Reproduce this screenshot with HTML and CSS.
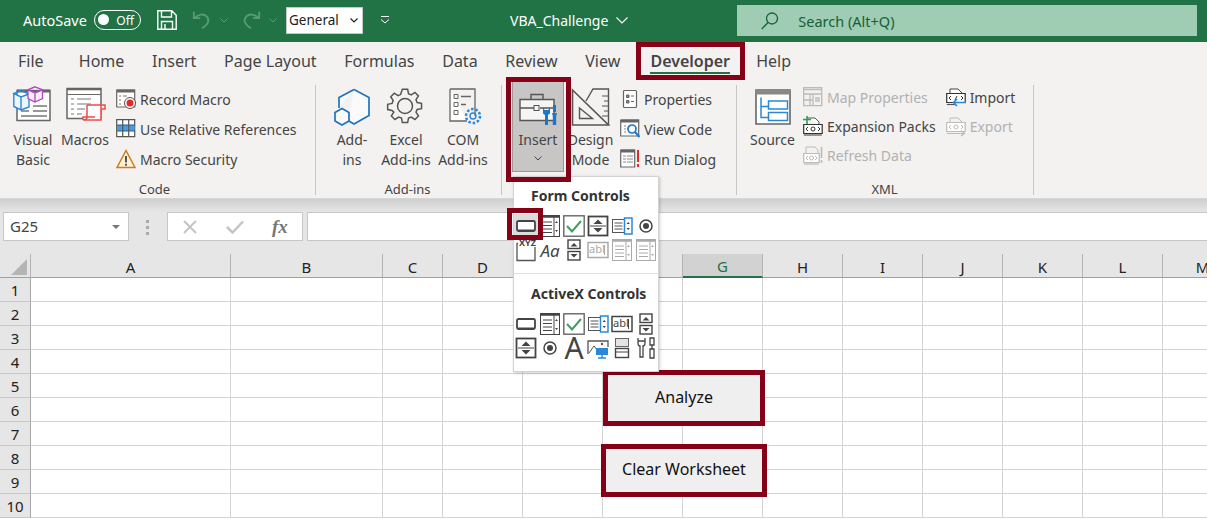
FILE: index.html
```html
<!DOCTYPE html>
<html lang="en">
<head>
    <meta charset="UTF-8">
    <title>VBA_Challenge - Excel</title>
    <link rel="stylesheet" href="styles.css">
</head>
<body>
    <svg class="defs" width="0" height="0">
        <symbol id="c-button" viewBox="0 0 22 22"><rect x="2" y="6" width="18" height="10" rx="1.5" fill="#fff" stroke="currentColor" stroke-width="1.8"/><path d="M3 15.5h16" stroke="currentColor" stroke-width="2"/></symbol>
        <symbol id="c-combo" viewBox="0 0 22 22"><rect x="1.5" y=".5" width="19" height="21" fill="#fff" stroke="currentColor"/><path d="M2 1.5h18" stroke="currentColor" stroke-width="2.5"/><path d="M4 7h9M4 10.5h9M4 14h9M4 17.5h9M15 1v20" stroke="currentColor"/><path d="M16 8l1.5-2 1.500 2zM16 15l1.5 2 1.500-2z" fill="currentColor"/></symbol>
        <symbol id="c-check" viewBox="0 0 22 22"><rect x=".8" y=".8" width="20.400" height="20.400" fill="#fff" stroke="#666" stroke-width="1.400"/><path d="M4 11l5 5.500L18 6" fill="none" stroke="#3f9f5f" stroke-width="2"/></symbol>
        <symbol id="c-spin" viewBox="0 0 22 22"><rect x="1.500" y="1.500" width="19" height="19" fill="#fff" stroke="currentColor" stroke-width="1.800"/><path d="M3 11h16" stroke="currentColor"/><path d="M6.500 9l4.500-4.500L15.500 9zM6.500 13l4.500 4.500 4.500-4.500z" fill="currentColor"/></symbol>
        <symbol id="c-list" viewBox="0 0 22 22"><rect x="1.500" y="4.500" width="19" height="13" fill="#fff" stroke="#555"/><path d="M3.500 8h8M3.500 11h8M3.500 14h8" stroke="#555"/><rect x="13.500" y="3" width="7.500" height="16" fill="#fff" stroke="#2b88d8" stroke-width="1.500"/><path d="M15.500 9l1.700-2 1.700 2zM15.500 13l1.700 2 1.700-2z" fill="#444"/></symbol>
        <symbol id="c-radio" viewBox="0 0 22 22"><circle cx="11" cy="11" r="6" fill="#fff" stroke="currentColor" stroke-width="1.500"/><circle cx="11" cy="11" r="3" fill="currentColor"/></symbol>
        <symbol id="c-scroll" viewBox="0 0 22 22"><rect x="5" y="1" width="12" height="8.500" fill="#fff" stroke="currentColor" stroke-width="1.400"/><rect x="5" y="12.500" width="12" height="8.500" fill="#fff" stroke="currentColor" stroke-width="1.400"/><path d="M7.500 7.500l3.500-3.500 3.500 3.500zM7.500 15l3.500 3.500 3.500-3.500z" fill="currentColor"/></symbol>
        <symbol id="c-ablbox" viewBox="0 0 22 22"><rect x="1" y="3.500" width="20" height="15" fill="#fff" stroke="currentColor" stroke-width="1.500"/><path d="M17.500 6v10" stroke="currentColor"/></symbol>
    </svg>

    <!-- title bar -->
    <div class="titlebar">
        <span class="autosave">AutoSave</span>
        <span class="toggle"><i></i>Off</span>
        <svg class="save" viewBox="0 0 20 20"><path d="M.8.8h14l4.400 4.400v14H.8z M4.500 1v6h10V1 M4.500 19.200v-7.700h11v7.700 M8 14v5" fill="none" stroke="#fff" stroke-width="1.400"/></svg>
        <svg class="undo" viewBox="0 0 22 22"><path d="M2 2v7h7M3 9c4-5 10-5 13-2 4 4 2 9-5 13" fill="none" stroke="#5a9a78" stroke-width="2"/></svg>
        <svg class="chev dim" viewBox="0 0 8 5"><path d="M.5.5L4 4 7.500.5" fill="none" stroke="#5a9a78"/></svg>
        <svg class="redo" viewBox="0 0 22 22"><path d="M20 2v7h-7M19 9c-4-5-10-5-13-2-4 4-2 9 5 13" fill="none" stroke="#5a9a78" stroke-width="2"/></svg>
        <svg class="chev dim" viewBox="0 0 8 5"><path d="M.5.5L4 4 7.500.5" fill="none" stroke="#5a9a78"/></svg>
        <span class="styledrop">General<svg class="chev" viewBox="0 0 8 5"><path d="M.5.5L4 4 7.500.5" fill="none" stroke="#222" stroke-width="1.200"/></svg></span>
        <svg class="custom" viewBox="0 0 10 8"><path d="M1 .5h8M1 3.500L5 7l4-3.500" fill="none" stroke="#fff"/></svg>
        <span class="docname">VBA_Challenge<svg class="docchev" viewBox="0 0 12 7"><path d="M.5.5L6 6l5.500-5.500" fill="none" stroke="#fff" stroke-width="1.100"/></svg></span>
        <div class="search">
            <svg class="lens" viewBox="0 0 18 18"><circle cx="11" cy="6.500" r="5.500" fill="none" stroke="#14603a" stroke-width="1.300"/><path d="M7 10.500L.8 17" stroke="#14603a" stroke-width="1.300"/></svg>
            Search (Alt+Q)
        </div>
    </div>

    <!-- tabs -->
    <div class="tabs">
        <span class="tab tab-file">File</span>
        <span class="tab">Home</span>
        <span class="tab">Insert</span>
        <span class="tab">Page Layout</span>
        <span class="tab">Formulas</span>
        <span class="tab">Data</span>
        <span class="tab">Review</span>
        <span class="tab">View</span>
        <span class="tab active">Developer</span>
        <span class="tab">Help</span>
    </div>

    <!-- ribbon -->
    <div class="ribbon">
        <div class="group g-code">
            <div class="group-body">
                <div class="big w50">
                    <svg class="ico" viewBox="0 0 40 36"><path d="M4 4.500h33v30H4z" fill="#fff" stroke="#666" stroke-width="1.500"/><path d="M4 5h33" stroke="#666" stroke-width="3"/><path d="M20 20h14M8 25h8M20 25h14M8 30h26" stroke="#777" stroke-width="1.300"/><path d="M8 4.500l8 3.500v13L8 24 .8 20.500v-13z M8 4.500L.8 7.500 8 11l8-3 M8 11v13" fill="#eef6fd" stroke="#2b88d8" stroke-width="1.400"/><path d="M22 .8l7.500 3v8.700L22 16l-7-3.500V3.800z M15 3.800L22 7l7.500-3.200 M22 7v9" fill="#f8eefb" stroke="#b146c2" stroke-width="1.300"/></svg>
                    <span>Visual<br>Basic</span>
                </div>
                <div class="big w50 m2">
                    <svg class="ico" viewBox="0 0 40 36"><path d="M2 2.500h34v30H2z" fill="#fff" stroke="#666" stroke-width="1.500"/><path d="M2 3.500h34" stroke="#666" stroke-width="1.500"/><path d="M2 8.500h34" stroke="#666"/><path d="M6 13h3M12 13h14M6 18h3M12 18h14M6 23h3M12 23h8M6 28h3M12 28h5" stroke="#777" stroke-width="1.200"/><path d="M22 19h14v15H20 M22 19v12c0 2-1 3-4 3h2 M36 19h4v4h-4 M18 34v-3h12" fill="#fff" stroke="#f04b4b" stroke-width="1.500"/></svg>
                    <span>Macros</span>
                </div>
                <div class="smalls ml6">
                    <div class="small">
                        <svg class="ico-s" viewBox="0 0 20 20"><path d="M.7 1h18v17H.7z" fill="#fff" stroke="#666" stroke-width="1.200"/><path d="M1 2h18" stroke="#666" stroke-width="3"/><path d="M3 7h2M7 7h4M3 11h2M3 15h2" stroke="#777"/><circle cx="14" cy="14" r="5.500" fill="#fff" stroke="#555"/><circle cx="14" cy="14" r="3.500" fill="#e8272c"/></svg>
                        Record Macro
                    </div>
                    <div class="small">
                        <svg class="ico-s" viewBox="0 0 20 20"><path d="M.7.7h18v17H.7z" fill="#fff" stroke="#555" stroke-width="1.200"/><rect x="1" y="6" width="17.500" height="6" fill="#4a9bdc"/><path d="M1 6h18M1 12h18" stroke="#1c5fa8" stroke-width="1.200"/><path d="M6.700 1v17M12.700 1v17" stroke="#555" stroke-width="1.200"/></svg>
                        Use Relative References
                    </div>
                    <div class="small">
                        <svg class="ico-s" viewBox="0 0 20 20"><path d="M10 1.500L19 18.500H1z" fill="#fdf3d8" stroke="#d8781e" stroke-width="1.500"/><path d="M10 7v6.500M10 14.800v2" stroke="#444" stroke-width="1.800"/></svg>
                        Macro Security
                    </div>
                </div>
            </div>
            <div class="group-label">Code</div>
        </div>

        <div class="group g-addins">
            <div class="group-body">
                <div class="big w40">
                    <svg class="ico" viewBox="0 0 40 36"><path d="M22 3.500l15 8v18l-15 8.500-6-3.500M7 22V11.500l15-8" fill="#fafafa" stroke="#2272b9" stroke-width="1.700"/><path d="M10 22.500l7 4v8.500l-7 4-7-4v-8.500z" fill="#fafafa" stroke="#2272b9" stroke-width="1.700"/></svg>
                    <span>Add-<br>ins</span>
                </div>
                <div class="big w52 ml8">
                    <svg class="ico" viewBox="0 0 40 36"><circle cx="19" cy="20" r="7.500" fill="none" stroke="#555" stroke-width="1.500"/><path d="M17 1h6l1 5 3 1.300 4.300-2.800 4 4-2.800 4.300 1.300 3.200 5 1v6l-5 1-1.300 3 2.800 4.300-4 4-4.300-2.800-3 1.300-1 5h-6l-1-5-3.200-1.300-4.300 2.800-4-4 2.800-4.300L5.300 25l-5-1v-6l5-1 1.300-3.200L3.800 9.500l4-4 4.300 2.800L15 7z" transform="translate(1.400 2.400) scale(.88)" fill="none" stroke="#555" stroke-width="1.700"/></svg>
                    <span>Excel<br>Add-ins</span>
                </div>
                <div class="big w54 ml4">
                    <svg class="ico" viewBox="0 0 40 36"><path d="M7 3h25v27" fill="none" stroke="#666" stroke-width="1.300"/><path d="M7 3v32h17" fill="#fff" stroke="#666" stroke-width="1.300"/><path d="M11 8.500h4v4h-4zM11 16.500h4v4h-4zM11 24.500h4v4h-4z" fill="none" stroke="#666"/><path d="M18 10.500h10M18 18.500h5" stroke="#666" stroke-width="1.300"/><circle cx="30" cy="30" r="3" fill="none" stroke="#2b88d8" stroke-width="1.400"/><circle cx="30" cy="30" r="7" fill="none" stroke="#2b88d8" stroke-width="2.500" stroke-dasharray="2.500 1.900"/></svg>
                    <span>COM<br>Add-ins</span>
                </div>
            </div>
            <div class="group-label addins-label">Add-ins</div>
        </div>

        <div class="group g-controls">
            <div class="group-body">
                <div class="insert">
                    <svg class="ico" viewBox="0 0 40 36"><path d="M1 7.500h34v21H1z" fill="#f5f5f5" stroke="#555" stroke-width="1.400"/><path d="M12 7V2.500h12V7M1 16h14M21 16h14" fill="none" stroke="#555" stroke-width="1.400"/><rect x="15" y="13.500" width="5" height="5" fill="#f5f5f5" stroke="#555"/><path d="M24 15v6.500l2 1.500v10h3V23l2-1.500V15l-1.500 3h-4z" fill="#1e76c8"/><rect x="34" y="13" width="3" height="7" fill="#1e76c8"/><path d="M33 21h5l-.8 3v9h-3.400v-9z" fill="#1e76c8"/></svg>
                    <span>Insert</span>
                    <svg class="chev ins-chev" viewBox="0 0 8 5"><path d="M.5.5L4 4 7.500.5" fill="none" stroke="#444"/></svg>
                </div>
                <div class="big design">
                    <svg class="ico" viewBox="0 0 40 36"><path d="M1.500 4l36 35h-36z" fill="none" stroke="#555" stroke-width="1.600"/><path d="M8.500 22l13 10.500h-13z" fill="none" stroke="#555" stroke-width="1.400"/><path d="M15 15l7-12h15.500v36" fill="none" stroke="#555" stroke-width="1.400"/><path d="M31 10h6M33 15h4M31 20h6M33 25h4M31 30h6" stroke="#555"/></svg>
                    <span>Design<br>Mode</span>
                </div>
                <div class="smalls ml7">
                    <div class="small">
                        <svg class="ico-s" viewBox="0 0 20 20"><rect x="3.500" y="1.500" width="13" height="17" rx="1" fill="#fff" stroke="#666" stroke-width="1.200"/><path d="M6.500 6H9v2.500H6.500zM6.500 11.500H9V14H6.500zM11 7h3M11 12.500h3" stroke="#666" fill="#888"/></svg>
                        Properties
                    </div>
                    <div class="small">
                        <svg class="ico-s" viewBox="0 0 20 20"><path d="M.7 1h18v16H.7z" fill="#fff" stroke="#666" stroke-width="1.200"/><path d="M1 2h18" stroke="#666" stroke-width="3"/><path d="M4 7h2M4 10h2M4 13h2" stroke="#888"/><circle cx="12" cy="10" r="4" fill="#fff" stroke="#1e76c8" stroke-width="1.700"/><path d="M15 13l4.500 5" stroke="#1e76c8" stroke-width="2"/></svg>
                        View Code
                    </div>
                    <div class="small">
                        <svg class="ico-s" viewBox="0 0 20 20"><path d="M.7 1h14v17H.7z" fill="#fff" stroke="#666" stroke-width="1.200"/><path d="M1 2h14" stroke="#666" stroke-width="3"/><path d="M3 7h3M7 7h6M3 10h3M7 10h6M3 13h3M7 13h6" stroke="#888"/><path d="M18 1v12M18 15v3" stroke="#e8272c" stroke-width="2"/></svg>
                        Run Dialog
                    </div>
                </div>
            </div>
        </div>

        <div class="group g-xml">
            <div class="group-body">
                <div class="big source">
                    <svg class="ico" viewBox="0 0 40 36"><path d="M3 1.500h34v34H3z" fill="#fff" stroke="#666" stroke-width="1.600"/><rect x="3" y="1" width="34" height="5" fill="#888"/><path d="M8 9v20h8M8 18h8" fill="none" stroke="#2b88d8" stroke-width="1.500"/><path d="M15.500 12.500h19v8h-19zM15.500 24h19v8h-19z" fill="#fff" stroke="#2b88d8" stroke-width="1.500"/></svg>
                    <span>Source</span>
                </div>
                <div class="smalls xml-col ml8">
                    <div class="small off">
                        <svg class="ico-s" viewBox="0 0 20 20"><path d="M.7.7h18v18H.7z" fill="none" stroke="#bbb" stroke-width="1.300"/><path d="M1 2.500h18M1 7h18M1 13h9M7 7v12M10 7v12" stroke="#bbb" stroke-width="1.300"/><path d="M12 10h5v5h-5z" fill="#ccc"/></svg>
                        Map Properties
                    </div>
                    <div class="small">
                        <svg class="ico-s" viewBox="0 0 20 20"><path d="M4 2h8l4 4v3H2v8h16v-8" fill="#fff" stroke="#555"/><path d="M.7 8.500h18.500v9H.7z" fill="#fff" stroke="#333" stroke-width="1.200"/><path d="M.8 19h18" stroke="#555" stroke-width="1.200"/><path d="M5 11l-2 2 2 2M15 11l2 2-2 2" fill="none" stroke="#333"/><circle cx="10" cy="13" r="2" fill="none" stroke="#333"/><path d="M0 3.500h8M4 0v8" stroke="#2f9e55" stroke-width="1.600"/></svg>
                        Expansion Packs
                    </div>
                    <div class="small off">
                        <svg class="ico-s" viewBox="0 0 20 20"><path d="M3 8V2h9l3 3v3" fill="none" stroke="#bbb"/><path d="M.7 8.500h15.500v9H.7z" fill="#fff" stroke="#bbb" stroke-width="1.200"/><path d="M.8 19h15" stroke="#bbb" stroke-width="1.200"/><path d="M5 11l-2 2 2 2M12 11l2 2-2 2" fill="none" stroke="#bbb"/><circle cx="8.500" cy="13" r="2" fill="none" stroke="#bbb"/><path d="M18.500 2v11M18.500 15v3" stroke="#bbb" stroke-width="1.600"/></svg>
                        Refresh Data
                    </div>
                </div>
                <div class="smalls xml-col ml10">
                    <div class="small">
                        <svg class="ico-s" viewBox="0 0 20 20"><path d="M4 8V2h8l4 4v2" fill="#fff" stroke="#444"/><path d="M.7 6.500h18.500v9H.7z" fill="#fff" stroke="#333" stroke-width="1.200"/><path d="M.8 17.500h9" stroke="#555" stroke-width="1.200"/><path d="M5 9l-2 2 2 2M15 9l2 2-2 2M9 13l2-4" fill="none" stroke="#333"/><path d="M20 15.500H8M11 12l-3.500 3.500L11 19" fill="none" stroke="#2b88d8" stroke-width="1.600"/></svg>
                        Import
                    </div>
                    <div class="small off">
                        <svg class="ico-s" viewBox="0 0 20 20"><path d="M4 7V2h8l4 4v1" fill="none" stroke="#bbb"/><path d="M.7 6.500h18.500v9H.7z" fill="#fff" stroke="#bbb" stroke-width="1.200"/><path d="M5 9l-2 2 2 2M15 9l2 2-2 2" fill="none" stroke="#bbb"/><circle cx="10" cy="11" r="2" fill="none" stroke="#bbb"/><path d="M.8 17.500H18M15 14.500l3.500 3-3.500 2.500" fill="none" stroke="#bbb" stroke-width="1.200"/></svg>
                        Export
                    </div>
                </div>
            </div>
            <div class="group-label">XML</div>
        </div>
    </div>

    <!-- formula bar -->
    <div class="formula">
        <div class="namebox">G25<i class="tri"></i></div>
        <div class="grip"><i></i><i></i><i></i></div>
        <div class="fxbox">
            <svg class="fx-x" viewBox="0 0 16 16"><path d="M2 2l12 12M14 2L2 14" stroke="#c4c4c4" stroke-width="2"/></svg>
            <svg class="fx-v" viewBox="0 0 18 14"><path d="M1 7l5.500 5.500L17 1.500" fill="none" stroke="#c4c4c4" stroke-width="2.500"/></svg>
            <span class="fx">fx</span>
        </div>
        <div class="fxinput"></div>
    </div>

    <!-- sheet -->
    <table class="sheet">
        <colgroup>
            <col class="c-head"><col class="c-a"><col class="c-b"><col class="c-c">
            <col class="c-n"><col class="c-n"><col class="c-n"><col class="c-n"><col class="c-n">
            <col class="c-n"><col class="c-n"><col class="c-n"><col class="c-n"><col class="c-n">
        </colgroup>
        <tr class="heads">
            <th class="corner"><i></i></th><th>A</th><th>B</th><th>C</th><th>D</th><th>E</th><th>F</th><th class="sel">G</th><th>H</th><th>I</th><th>J</th><th>K</th><th>L</th><th>M</th>
        </tr>
        <tr><th>1</th><td></td><td></td><td></td><td></td><td></td><td></td><td></td><td></td><td></td><td></td><td></td><td></td><td></td></tr>
        <tr><th>2</th><td></td><td></td><td></td><td></td><td></td><td></td><td></td><td></td><td></td><td></td><td></td><td></td><td></td></tr>
        <tr><th>3</th><td></td><td></td><td></td><td></td><td></td><td></td><td></td><td></td><td></td><td></td><td></td><td></td><td></td></tr>
        <tr><th>4</th><td></td><td></td><td></td><td></td><td></td><td></td><td></td><td></td><td></td><td></td><td></td><td></td><td></td></tr>
        <tr><th>5</th><td></td><td></td><td></td><td></td><td></td><td></td><td></td><td></td><td></td><td></td><td></td><td></td><td></td></tr>
        <tr><th>6</th><td></td><td></td><td></td><td></td><td></td><td></td><td></td><td></td><td></td><td></td><td></td><td></td><td></td></tr>
        <tr><th>7</th><td></td><td></td><td></td><td></td><td></td><td></td><td></td><td></td><td></td><td></td><td></td><td></td><td></td></tr>
        <tr><th>8</th><td></td><td></td><td></td><td></td><td></td><td></td><td></td><td></td><td></td><td></td><td></td><td></td><td></td></tr>
        <tr><th>9</th><td></td><td></td><td></td><td></td><td></td><td></td><td></td><td></td><td></td><td></td><td></td><td></td><td></td></tr>
        <tr><th>10</th><td></td><td></td><td></td><td></td><td></td><td></td><td></td><td></td><td></td><td></td><td></td><td></td><td></td></tr>
    </table>

    <!-- buttons on the sheet -->
    <div class="sheet-btn btn-analyze">Analyze</div>
    <div class="sheet-btn btn-clear">Clear Worksheet</div>

    <!-- insert dropdown -->
    <div class="menu">
        <div class="menu-title">Form Controls</div>
        <div class="menu-grid">
            <span class="cell hot"><svg><use href="#c-button"/></svg></span>
            <span class="cell"><svg><use href="#c-combo"/></svg></span>
            <span class="cell"><svg><use href="#c-check"/></svg></span>
            <span class="cell"><svg><use href="#c-spin"/></svg></span>
            <span class="cell"><svg><use href="#c-list"/></svg></span>
            <span class="cell"><svg><use href="#c-radio"/></svg></span>
            <span class="cell">
                <svg viewBox="0 0 22 22"><path d="M2 4.500h18v17H2z" fill="#fff" stroke="#555" stroke-width="1.300"/></svg>
                <b class="xyz">XYZ</b>
            </span>
            <span class="cell aa">Aa</span>
            <span class="cell"><svg><use href="#c-scroll"/></svg></span>
            <span class="cell off"><svg><use href="#c-ablbox"/></svg><b class="abl">abl</b></span>
            <span class="cell off"><svg><use href="#c-combo"/></svg></span>
            <span class="cell off"><svg><use href="#c-combo"/></svg></span>
        </div>
        <div class="menu-sep"></div>
        <div class="menu-title">ActiveX Controls</div>
        <div class="menu-grid">
            <span class="cell"><svg><use href="#c-button"/></svg></span>
            <span class="cell"><svg><use href="#c-combo"/></svg></span>
            <span class="cell"><svg><use href="#c-check"/></svg></span>
            <span class="cell"><svg><use href="#c-list"/></svg></span>
            <span class="cell"><svg><use href="#c-ablbox"/></svg><b class="abl">abl</b></span>
            <span class="cell"><svg><use href="#c-scroll"/></svg></span>
            <span class="cell"><svg><use href="#c-spin"/></svg></span>
            <span class="cell"><svg><use href="#c-radio"/></svg></span>
            <span class="cell big-a">A</span>
            <span class="cell"><svg viewBox="0 0 22 22"><path d="M1 17V4h20v6" fill="none" stroke="#555" stroke-width="1.300"/><path d="M2 16l5-7 4 5" fill="none" stroke="#555"/><circle cx="15" cy="7" r="1.200" fill="#555"/><rect x="9" y="11" width="12" height="7" fill="#2b88d8"/><path d="M15 18v3M11 21h8" stroke="#2b88d8" stroke-width="1.400"/></svg></span>
            <span class="cell"><svg viewBox="0 0 22 22"><rect x="4.500" y="1.500" width="13" height="8" fill="#e4e4e4" stroke="#666"/><rect x="4.500" y="11.500" width="13" height="9" fill="#fff" stroke="#444" stroke-width="1.400"/><path d="M4 15h14" stroke="#444"/></svg></span>
            <span class="cell"><svg viewBox="0 0 22 22"><path d="M3 1v5c0 2 1 3 2 3v11h3V9c1 0 2-1 2-3V1v3H3z" fill="none" stroke="#444" stroke-width="1.300"/><path d="M15 1h4v7h-4zM17 8v4M15 12h4v9h-4z" fill="none" stroke="#444" stroke-width="1.300"/></svg></span>
        </div>
    </div>

    <!-- red callouts -->
    <div class="mark mark-dev"></div>
    <div class="mark mark-insert"></div>
    <div class="mark mark-form"></div>
</body>
</html>
```

FILE: styles.css
```css
* {
    box-sizing: border-box;
}
html, body {
    height: 519px;
    overflow: hidden;
}
body {
    position: relative;
    margin: 0;
    font-family: "Noto Sans", "Open Sans", Arial, sans-serif;
    font-size: 14px;
    color: #444;
    background: #fff;
}
svg {
    display: block;
    flex: none;
    overflow: visible;
}
.defs {
    position: absolute;
}

/* title bar */
.titlebar {
    display: flex;
    align-items: center;
    height: 42px;
    padding: 0 0 2px 23px;
    background: #217346;
    color: #fff;
}
.autosave {
    font-size: 14.5px;
    width: 71px;
}
.toggle {
    display: flex;
    align-items: center;
    justify-content: flex-end;
    position: relative;
    width: 47px;
    height: 20px;
    padding-right: 6px;
    border: 1.5px solid #fff;
    border-radius: 10px;
    font-size: 12px;
}
.toggle i {
    position: absolute;
    left: 3px;
    top: 3px;
    width: 11px;
    height: 11px;
    border-radius: 50%;
    background: #fff;
}
.save {
    width: 20px;
    height: 20px;
    margin-left: 16px;
}
.undo {
    width: 20px;
    height: 20px;
    margin-left: 15px;
}
.redo {
    width: 20px;
    height: 20px;
    margin-left: 13px;
}
.chev {
    width: 8px;
    height: 5px;
}
.chev.dim {
    margin-left: 8px;
}
.styledrop {
    display: flex;
    align-items: center;
    justify-content: space-between;
    width: 77px;
    height: 27px;
    margin-left: 9px;
    padding: 0 4px 0 2px;
    background: #fff;
    border: 1px solid #c8c8c8;
    color: #222;
    font-size: 13.5px;
}
.custom {
    width: 10px;
    height: 8px;
    margin-left: 17px;
}
.docname {
    display: flex;
    align-items: center;
    gap: 8px;
    margin-left: 120px;
    font-size: 14px;
}
.docchev {
    width: 12px;
    height: 7px;
}
.search {
    display: flex;
    align-items: center;
    width: 460px;
    height: 31px;
    margin: 1px 0 0 109px;
    padding-left: 24px;
    background: #9fcdb3;
    color: #14603a;
    font-size: 14.5px;
}
.lens {
    width: 18px;
    height: 18px;
    margin-right: 19px;
}

/* tabs */
.tabs {
    display: flex;
    align-items: center;
    gap: 27.7px;
    height: 38px;
    padding-left: 18px;
    background: #f3f2f1;
    font-size: 16px;
}
.tab-file {
    margin-right: 7.5px;
}
.tab.active {
    position: relative;
    margin: 0 -1.5px 0 2.5px;
    font-weight: 600;
}
.tab.active::after {
    content: "";
    position: absolute;
    left: 0;
    right: 0;
    bottom: -2px;
    height: 2px;
    background: #217346;
}

/* ribbon */
.ribbon {
    display: flex;
    height: 119px;
    background: #f3f2f1;
    border-bottom: 1px solid #d6d6d6;
}
.group {
    position: relative;
    display: flex;
    flex-direction: column;
    height: 110px;
    margin-top: 5px;
    border-right: 1px solid #c8c6c4;
}
.g-code {
    width: 316px;
    padding-left: 8px;
}
.g-addins {
    width: 186px;
    padding-left: 16px;
}
.g-controls {
    width: 235px;
    padding-left: 10px;
}
.g-xml {
    width: 297px;
    padding-left: 13px;
}
.group-body {
    display: flex;
    height: 95px;
}
.group-label {
    height: 15px;
    line-height: 18px;
    text-align: center;
    font-size: 13px;
}
.g-code .group-label,
.g-xml .group-label {
    padding-right: 14px;
}
.addins-label {
    padding-right: 18px;
}
.big {
    display: flex;
    flex-direction: column;
    align-items: center;
    padding-top: 1px;
    text-align: center;
    line-height: 20px;
}
.big .ico {
    margin-bottom: 8px;
}
.ico {
    width: 40px;
    height: 36px;
}
.w50 {
    width: 50px;
}
.m2 {
    margin-left: 2px;
}
.w40 {
    width: 40px;
}
.w52 {
    width: 52px;
}
.w54 {
    width: 54px;
}
.ml4 {
    margin-left: 4px;
}
.ml6 {
    margin-left: 6px;
}
.ml7 {
    margin-left: 7px;
}
.ml8 {
    margin-left: 8px;
}
.ml10 {
    margin-left: 10px;
}
.smalls {
    display: flex;
    flex-direction: column;
    gap: 10px;
    padding-top: 4px;
}
.small {
    display: flex;
    align-items: center;
    gap: 4px;
    height: 20px;
    white-space: nowrap;
}
.ico-s {
    width: 20px;
    height: 20px;
}
.xml-col {
    gap: 9px;
    padding-top: 2px;
}
.small.off {
    color: #b1b1b1;
}
.insert {
    display: flex;
    flex-direction: column;
    align-items: center;
    width: 52px;
    height: 93px;
    margin-top: -6px;
    padding-top: 12px;
    background: #c8c6c4;
    border: 1px solid #9a9a9a;
    line-height: 20px;
}
.insert .ico {
    margin: 0 0 2px 2px;
}
.ins-chev {
    margin-top: 6px;
}
.design {
    width: 45px;
    margin-left: 4px;
}
.source {
    width: 45px;
}
.source .ico {
    margin: 2px 0 5px;
    height: 37px;
}

/* formula bar */
.formula {
    display: flex;
    align-items: flex-start;
    height: 55px;
    padding: 13px 0 0 3px;
    background: linear-gradient(#cfcfcf, #e6e6e6 13px);
}
.namebox {
    position: relative;
    width: 126px;
    height: 29px;
    padding-left: 6px;
    line-height: 27px;
    background: #fff;
    border: 1px solid #c6c6c6;
    font-size: 15px;
}
.tri {
    position: absolute;
    right: 8px;
    top: 12px;
    border-left: 4px solid transparent;
    border-right: 4px solid transparent;
    border-top: 4px solid #777;
}
.grip {
    display: flex;
    flex-direction: column;
    gap: 3px;
    width: 38px;
    padding: 8px 0 0 17px;
}
.grip i {
    width: 3px;
    height: 3px;
    background: #aaa;
}
.fxbox {
    display: flex;
    align-items: center;
    width: 136px;
    height: 29px;
    background: #fff;
    border: 1px solid #c6c6c6;
}
.fx-x {
    width: 16px;
    height: 16px;
    margin-left: 14px;
}
.fx-v {
    width: 18px;
    height: 14px;
    margin-left: 28px;
}
.fx {
    margin-left: 28px;
    font-family: "Liberation Serif", serif;
    font-style: italic;
    font-weight: bold;
    font-size: 19px;
    color: #777;
}
.fxinput {
    flex: 1;
    height: 29px;
    margin-left: 4px;
    background: #fff;
    border: 1px solid #c6c6c6;
    border-right: 0;
}

/* sheet */
.sheet {
    table-layout: fixed;
    border-collapse: separate;
    border-spacing: 0;
    width: 1243px;
    background: #fff;
}
.c-head {
    width: 31px;
}
.c-a {
    width: 200px;
}
.c-b {
    width: 152px;
}
.c-c {
    width: 60px;
}
.c-n {
    width: 80px;
}
.sheet td {
    height: 24px;
    padding: 0;
    border-right: 1px solid #d4d4d4;
    border-bottom: 1px solid #d4d4d4;
}
.sheet th {
    height: 24px;
    padding: 0;
    background: #e6e6e6;
    border-right: 1px solid #a8a8a8;
    border-bottom: 1px solid #c6c6c6;
    font-weight: normal;
    font-size: 15px;
    color: #222;
}
.heads th {
    border-bottom: 1px solid #9f9f9f;
    border-right: 1px solid #b4b4b4;
    padding-top: 2px;
}
.heads th.sel {
    background: #d2d2d2;
    color: #217346;
    border-bottom: 2px solid #217346;
}
.corner {
    position: relative;
}
.corner i {
    position: absolute;
    right: 3px;
    bottom: 2px;
    border-left: 16px solid transparent;
    border-bottom: 16px solid #b5b5b5;
}

/* buttons drawn on the sheet */
.sheet-btn {
    position: absolute;
    display: flex;
    align-items: center;
    justify-content: center;
    padding-bottom: 3px;
    background: #efefef;
    border: 5px solid #860018;
    color: #111;
    font-size: 16px;
}
.btn-analyze {
    left: 603px;
    top: 370px;
    width: 162px;
    height: 56px;
}
.btn-clear {
    left: 601px;
    top: 444px;
    width: 166px;
    height: 53px;
}

/* insert dropdown */
.menu {
    position: absolute;
    left: 513px;
    top: 176px;
    width: 146px;
    height: 196px;
    padding-top: 9px;
    background: #fff;
    border: 1px solid #d2d2d2;
    box-shadow: 1px 1px 3px rgba(0,0,0,0.2);
}
.menu-title {
    height: 22px;
    line-height: 20px;
    padding-left: 17px;
    font-weight: bold;
    font-size: 14px;
    color: #333;
}
.menu-grid {
    display: grid;
    grid-template-columns: repeat(6, 24px);
    grid-auto-rows: 24px;
    margin-top: 6px;
}
.cell {
    position: relative;
    display: flex;
    align-items: center;
    justify-content: center;
    color: #444;
}
.cell svg {
    width: 22px;
    height: 22px;
}
.cell.off {
    color: #aaa;
}
.cell.hot {
    background: #dcdcdc;
}
.abl {
    position: absolute;
    left: 3px;
    top: 3px;
    font-size: 11px;
    font-weight: normal;
}
.xyz {
    position: absolute;
    left: 4px;
    top: 0;
    padding: 0 1px;
    line-height: 9px;
    font-size: 9px;
    background: #fff;
}
.aa {
    font-size: 17px;
    font-style: italic;
}
.big-a {
    font-size: 30px;
    line-height: 24px;
}
.menu-sep {
    height: 1px;
    margin: 11px 0 10px;
    background: #e0e0e0;
}

/* red callouts */
.mark {
    position: absolute;
    border: 5px solid #860018;
}
.mark-dev {
    left: 636px;
    top: 42px;
    width: 109px;
    height: 38px;
}
.mark-insert {
    left: 506px;
    top: 77px;
    width: 65px;
    height: 105px;
}
.mark-form {
    left: 507px;
    top: 208px;
    width: 36px;
    height: 32px;
}
```
